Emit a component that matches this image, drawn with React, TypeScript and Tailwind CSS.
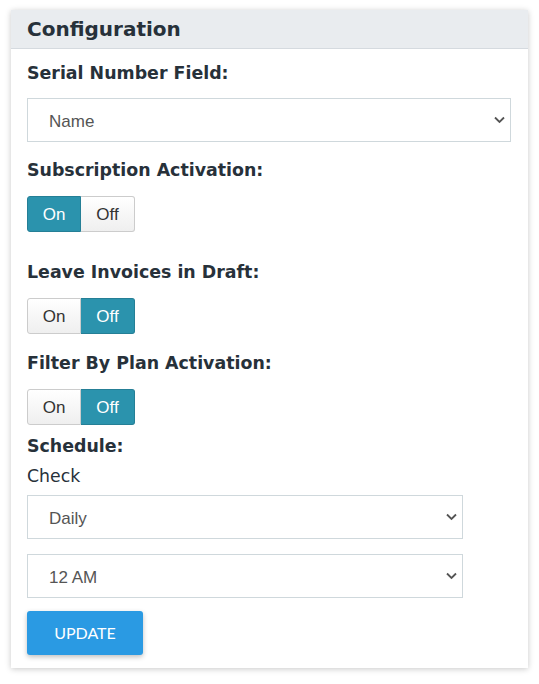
import React, { useState } from 'react';

const labelCls = "block text-[17.4px] leading-6 font-bold text-[#27313a] font-['DejaVu_Sans',Verdana,sans-serif]";

const Chevron = () => (
    <svg width="11" height="7" viewBox="0 0 11 7" className="pointer-events-none absolute right-[6px] top-1/2 -translate-y-1/2">
        <path d="M1 1 L5.5 5.5 L10 1" fill="none" stroke="#555" strokeWidth="1.8" />
    </svg>
);

const Select: React.FC<{ value: string; options: string[]; className?: string }> = ({ value, options, className }) => (
    <div className={`relative ${className ?? ''}`}>
        <select
            defaultValue={value}
            className="w-full h-[44px] appearance-none bg-white border border-[#cfd8dc] pl-[21px] pr-8 pt-[3px] text-[17px] text-[#555] font-['Liberation_Sans',Arial,sans-serif] outline-none"
        >
            {options.map(o => (
                <option key={o}>{o}</option>
            ))}
        </select>
        <Chevron />
    </div>
);

const Toggle: React.FC<{ initial: boolean }> = ({ initial }) => {
    const [on, setOn] = useState(initial);
    const seg = (active: boolean) =>
        active
            ? 'bg-[#2b93ad] text-white border-[#257f96]'
            : 'bg-gradient-to-b from-white to-[#efefef] text-[#333] border-[#cccccc]';
    return (
        <div className="flex h-[36px] w-[108px] font-['Liberation_Sans',Arial,sans-serif] text-[17px]">
            <button
                onClick={() => setOn(true)}
                className={`w-[54px] pt-[2px] border rounded-l-[3px] ${seg(on)}`}
            >
                On
            </button>
            <button
                onClick={() => setOn(false)}
                className={`w-[54px] pt-[2px] border border-l-0 rounded-r-[3px] ${seg(!on)}`}
            >
                Off
            </button>
        </div>
    );
};

export default function App() {
    return (
        <div className="min-h-screen bg-white pt-[10px] pl-[11px]">
            <div className="w-[517px] bg-white shadow-[0_1px_6px_rgba(0,0,0,0.22)]">
                <div className="h-[39px] bg-[#e9ecef] border-b border-[#d5dadf] px-4 flex items-center">
                    <h2 className="text-[20px] font-bold text-[#27313a] font-['DejaVu_Sans',Verdana,sans-serif]">
                        Configuration
                    </h2>
                </div>
                <div className="px-4 pb-[13px]">
                    <label className={`${labelCls} mt-[12px]`}>Serial Number Field:</label>
                    <Select value="Name" options={['Name', 'Email', 'ID']} className="mt-[13px] w-[484px]" />

                    <label className={`${labelCls} mt-[16px]`}>Subscription Activation:</label>
                    <div className="mt-[14px]">
                        <Toggle initial={true} />
                    </div>

                    <label className={`${labelCls} mt-[28px]`}>Leave Invoices in Draft:</label>
                    <div className="mt-[14px]">
                        <Toggle initial={false} />
                    </div>

                    <label className={`${labelCls} mt-[17px]`}>Filter By Plan Activation:</label>
                    <div className="mt-[14px]">
                        <Toggle initial={false} />
                    </div>

                    <label className={`${labelCls} mt-[9px]`}>Schedule:</label>
                    <div className="mt-[6px] text-[17.3px] leading-6 text-[#27313a] font-['DejaVu_Sans',Verdana,sans-serif]">
                        Check
                    </div>
                    <Select value="Daily" options={['Daily', 'Weekly', 'Monthly']} className="mt-[7px] w-[436px]" />
                    <Select value="12 AM" options={['12 AM', '1 AM', '2 AM']} className="mt-[15px] w-[436px]" />

                    <button className="mt-[13px] h-[44px] w-[116px] rounded-[3px] bg-[#2a9ae3] text-white text-[16px] font-['Lato',sans-serif] shadow-[0_2px_5px_rgba(0,0,0,0.25)]">
                        UPDATE
                    </button>
                </div>
            </div>
        </div>
    );
}
